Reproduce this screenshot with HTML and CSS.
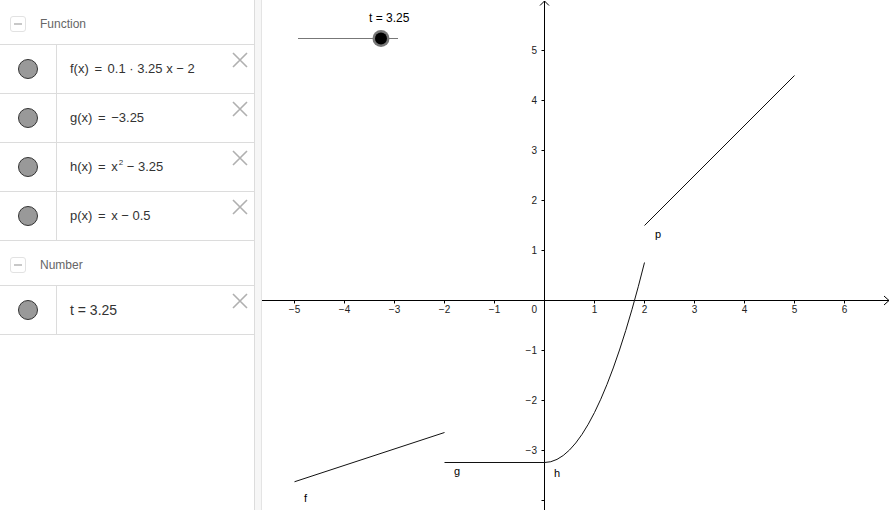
FILE: index.html
```html
<!DOCTYPE html>
<html>
<head>
<meta charset="utf-8">
<link rel="stylesheet" href="styles.css">
</head>
<body>
<div class="app">
  <div class="algebra">
    <div class="group-head">
      <span class="toggle"><span class="dash"></span></span>
      <span class="group-name">Function</span>
    </div>
    <div class="item">
      <div class="marble-cell"><span class="marble"></span></div>
      <div class="formula">f(x) <span class="eq">=</span> 0.1 · 3.25 x − 2</div>
      <svg class="close" viewBox="0 0 16 16"><path d="M1 1L15 15M15 1L1 15"/></svg>
    </div>
    <div class="item">
      <div class="marble-cell"><span class="marble"></span></div>
      <div class="formula">g(x) <span class="eq">=</span> −3.25</div>
      <svg class="close" viewBox="0 0 16 16"><path d="M1 1L15 15M15 1L1 15"/></svg>
    </div>
    <div class="item">
      <div class="marble-cell"><span class="marble"></span></div>
      <div class="formula">h(x) <span class="eq">=</span> x<sup>2</sup> − 3.25</div>
      <svg class="close" viewBox="0 0 16 16"><path d="M1 1L15 15M15 1L1 15"/></svg>
    </div>
    <div class="item">
      <div class="marble-cell"><span class="marble"></span></div>
      <div class="formula">p(x) <span class="eq">=</span> x − 0.5</div>
      <svg class="close" viewBox="0 0 16 16"><path d="M1 1L15 15M15 1L1 15"/></svg>
    </div>
    <div class="group-head">
      <span class="toggle"><span class="dash"></span></span>
      <span class="group-name">Number</span>
    </div>
    <div class="item">
      <div class="marble-cell"><span class="marble"></span></div>
      <div class="formula big">t <span class="eq">=</span> 3.25</div>
      <svg class="close" viewBox="0 0 16 16"><path d="M1 1L15 15M15 1L1 15"/></svg>
    </div>
  </div>
  <div class="splitter"></div>
  <div class="graphics">
    <svg class="canvas" width="629" height="510" viewBox="262 0 629 510">
      <g class="axes">
        <line x1="262" y1="300.5" x2="889" y2="300.5"/>
        <polyline points="884,296 889,300.5 884,305" fill="none"/>
        <line x1="544.5" y1="510" x2="544.5" y2="1"/>
        <polyline points="540,5.5 544.5,1 549,5.5" fill="none"/>
        <path d="M294.5 300.5v3M344.5 300.5v3M394.5 300.5v3M444.5 300.5v3M494.5 300.5v3M594.5 300.5v3M644.5 300.5v3M694.5 300.5v3M744.5 300.5v3M794.5 300.5v3M844.5 300.5v3"/>
        <path d="M544.5 50.5h-3M544.5 100.5h-3M544.5 150.5h-3M544.5 200.5h-3M544.5 250.5h-3M544.5 350.5h-3M544.5 400.5h-3M544.5 450.5h-3M544.5 500.5h-3"/>
      </g>
      <g class="xlabels">
        <text x="294.5" y="313">−5</text>
        <text x="344.5" y="313">−4</text>
        <text x="394.5" y="313">−3</text>
        <text x="444.5" y="313">−2</text>
        <text x="494.5" y="313">−1</text>
        <text x="594.5" y="313">1</text>
        <text x="644.5" y="313">2</text>
        <text x="694.5" y="313">3</text>
        <text x="744.5" y="313">4</text>
        <text x="794.5" y="313">5</text>
        <text x="844.5" y="313">6</text>
      </g>
      <g class="ylabels">
        <text x="537" y="313">0</text>
        <text x="537" y="54">5</text>
        <text x="537" y="104">4</text>
        <text x="537" y="154">3</text>
        <text x="537" y="204">2</text>
        <text x="537" y="254">1</text>
        <text x="537" y="354">−1</text>
        <text x="537" y="404">−2</text>
        <text x="537" y="454">−3</text>
      </g>
      <g class="curves">
        <line x1="294.5" y1="481.75" x2="444.5" y2="432.5"/>
        <line x1="444.5" y1="462.5" x2="544.5" y2="462.5"/>
        <path d="M544.5 462.5Q594.5 462.5 644.5 262.5"/>
        <line x1="644.5" y1="225.5" x2="794.5" y2="75.5"/>
      </g>
      <g class="fnlabels">
        <text x="304" y="502">f</text>
        <text x="454" y="475">g</text>
        <text x="554" y="477">h</text>
        <text x="655" y="238">p</text>
      </g>
      <g class="slider">
        <line class="track" x1="298" y1="38.5" x2="398" y2="38.5"/>
        <circle class="knob-ring" cx="381" cy="38.5" r="8.5"/>
        <circle class="knob" cx="381" cy="38.5" r="6"/>
        <text class="slider-label" x="369" y="22">t = 3.25</text>
      </g>
    </svg>
  </div>
</div>
</body>
</html>
```
FILE: styles.css
```css
html, body {
  margin: 0;
  padding: 0;
  background: #fff;
}
body {
  font-family: "Liberation Sans", Arial, sans-serif;
  width: 891px;
  height: 510px;
  overflow: hidden;
}
.app {
  display: flex;
  height: 510px;
}
.algebra {
  width: 255px;
  box-sizing: border-box;
  border-right: 1px solid #dcdcdc;
  display: flex;
  flex-direction: column;
}
.group-head {
  height: 45px;
  box-sizing: border-box;
  border-bottom: 1px solid #dcdcdc;
  display: flex;
  align-items: center;
  padding-left: 10px;
  padding-top: 3px;
}
.toggle {
  width: 16px;
  height: 16px;
  box-sizing: border-box;
  border: 1px solid #e2e2e2;
  border-radius: 3px;
  display: flex;
  align-items: center;
  justify-content: center;
}
.dash {
  width: 8px;
  height: 2px;
  background: #c8c8c8;
}
.group-name {
  margin-left: 14px;
  font-size: 12px;
  color: #666;
}
.item {
  height: 49px;
  box-sizing: border-box;
  border-bottom: 1px solid #dcdcdc;
  display: flex;
}
.marble-cell {
  width: 57px;
  box-sizing: border-box;
  border-right: 1px solid #dcdcdc;
  display: flex;
  align-items: center;
  justify-content: center;
  padding-right: 1px;
  padding-bottom: 1px;
}
.marble {
  width: 20px;
  height: 20px;
  box-sizing: border-box;
  border-radius: 50%;
  background: #999;
  border: 1px solid #333;
}
.formula {
  flex: 1;
  display: flex;
  align-items: center;
  padding-left: 13px;
  padding-bottom: 1px;
  font-size: 13px;
  color: #333;
  white-space: pre;
}
.formula .eq {
  margin: 0 2px;
}
.formula sup {
  font-size: 8px;
  position: relative;
  top: -4px;
  margin-left: 1px;
}
.formula.big {
  font-size: 14px;
}
.formula.big .eq {
  margin: 0;
}
.close {
  width: 16px;
  height: 16px;
  margin-top: 7px;
  margin-right: 6px;
}
.close path {
  stroke: #b0b0b0;
  stroke-width: 1.6;
  fill: none;
}
.splitter {
  width: 7px;
  box-sizing: border-box;
  background: #f6f6f6;
  border-right: 1px solid #e4e4e4;
}
.graphics {
  flex: 1;
  overflow: hidden;
}
.canvas {
  display: block;
}
.axes line, .axes polyline, .axes path {
  stroke: #000;
  stroke-width: 1;
  fill: none;
}
.xlabels text, .ylabels text {
  font-family: "Liberation Sans", Arial, sans-serif;
  font-size: 10px;
  fill: #222;
}
.xlabels text {
  text-anchor: middle;
}
.ylabels text {
  text-anchor: end;
}
.curves line, .curves path {
  stroke: #111;
  stroke-width: 1;
  fill: none;
}
.fnlabels text {
  font-family: "Liberation Sans", Arial, sans-serif;
  font-size: 11px;
  fill: #000;
}
.track {
  stroke: #777;
  stroke-width: 1;
}
.knob-ring {
  fill: #777;
}
.knob {
  fill: #000;
}
.slider-label {
  font-family: "Liberation Sans", Arial, sans-serif;
  font-size: 12px;
  fill: #000;
}
```
